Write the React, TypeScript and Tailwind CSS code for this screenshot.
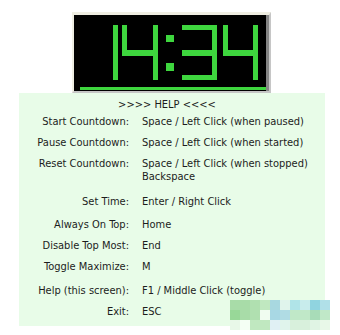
const GREEN = '#3ed63e'

const rows: { label: string; value: string[]; mt: string }[] = [
  { label: 'Start Countdown:', value: ['Space / Left Click (when paused)'], mt: 'mt-[4px]' },
  { label: 'Pause Countdown:', value: ['Space / Left Click (when started)'], mt: 'mt-[8px]' },
  { label: 'Reset Countdown:', value: ['Space / Left Click (when stopped)', 'Backspace'], mt: 'mt-[8px]' },
  { label: 'Set Time:', value: ['Enter / Right Click'], mt: 'mt-[12px]' },
  { label: 'Always On Top:', value: ['Home'], mt: 'mt-[10px]' },
  { label: 'Disable Top Most:', value: ['End'], mt: 'mt-[8px]' },
  { label: 'Toggle Maximize:', value: ['M'], mt: 'mt-[8px]' },
  { label: 'Help (this screen):', value: ['F1 / Middle Click (toggle)'], mt: 'mt-[11px]' },
  { label: 'Exit:', value: ['ESC'], mt: 'mt-[8px]' },
]

// watermark mosaic, bottom right
const mosaic = [
  ['#a8dca8', '#a8dca8', '#b0e0b0', '#c0e8c0', '#a8d8e0', '#e0f4ec', '#b0e4e8', '#c8ecec', '#90d4e0', '#b0e0e8'],
  ['#98d898', '#a8dca8', '#b0e0b0', '#f0fcf0', '#a8d8e4', '#b0dce4', '#c0e8c8', '#c0e8c8', '#a8dcb8', '#c0e8c8'],
  ['#e8f8e8', '#f4fff4', '#c0e8c0', '#c0e8c0', '#e0f0f4', '#e0f4ec', '#d8f0dc', '#d8f0dc', '#e0f4e4', '#e8f8e8'],
]

function Clock() {
  return (
    <div className="ml-[72px] mt-[12px] w-[199px] h-[81px] border-2 border-t-[3px] border-t-[#efeee2] border-l-[#efeee2] border-r-[#c6c6c6] border-b-[#c6c6c6]">
      <div className="h-full border-r-[3px] border-[#858585] bg-black">
        <svg width="192" height="76" viewBox="0 0 192 76" className="block">
          <g fill={GREEN}>
            {/* 1 */}
            <rect x="39" y="10" width="5" height="55" />
            {/* 4 */}
            <rect x="48" y="10" width="5" height="31" />
            <rect x="48" y="35" width="36" height="6" />
            <rect x="79" y="10" width="5" height="55" />
            {/* : */}
            <rect x="92" y="20" width="8" height="7" />
            <rect x="92" y="48" width="8" height="8" />
            {/* 3 */}
            <rect x="108" y="10" width="35" height="5" />
            <rect x="108" y="35" width="35" height="6" />
            <rect x="108" y="60" width="35" height="5" />
            <rect x="138" y="10" width="5" height="55" />
            {/* 4 */}
            <rect x="149" y="10" width="5" height="31" />
            <rect x="149" y="35" width="35" height="6" />
            <rect x="179" y="10" width="5" height="55" />
            {/* progress bar */}
            <rect x="6" y="72" width="186" height="3" />
          </g>
        </svg>
      </div>
    </div>
  )
}

export default function App() {
  return (
    <div className="relative w-[340px] h-[335px] bg-white font-['DejaVu_Sans_Condensed','DejaVu_Sans',sans-serif] text-[11px] leading-[13px] text-[#1c1c1c]">
      <div className="pt-[0.1px]">
        <Clock />
      </div>
      <section className="ml-[19px] w-[306px] bg-[#e8fce8] pt-[5px] pb-[8px]">
        <div className="text-center pr-[10px]">&gt;&gt;&gt;&gt; HELP &lt;&lt;&lt;&lt;</div>
        {rows.map(r => (
          <div key={r.label} className={`grid grid-cols-[110px_1fr] gap-x-[13px] ${r.mt}`}>
            <div className="text-right whitespace-nowrap">{r.label}</div>
            <div className="whitespace-nowrap">
              {r.value.map(v => <div key={v}>{v}</div>)}
            </div>
          </div>
        ))}
      </section>
      <div className="absolute left-[230px] top-[300px] grid grid-cols-[repeat(10,10px)]">
        {mosaic.flat().map((c, i) => (
          <div key={i} className="w-[10px] h-[10px]" style={{ backgroundColor: c }} />
        ))}
      </div>
    </div>
  )
}
